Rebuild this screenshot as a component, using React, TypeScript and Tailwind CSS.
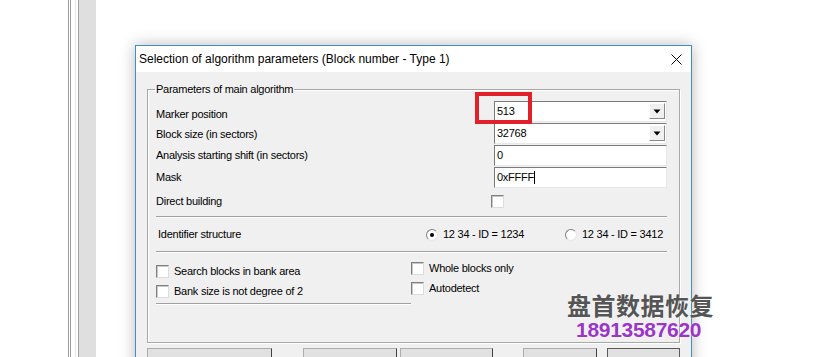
import React from "react";

const Check = () => (
  <div className="w-[13px] h-[13px] shrink-0 bg-white border border-t-[#808080] border-l-[#808080] border-r-[#dcdcdc] border-b-[#dcdcdc] shadow-[inset_1px_1px_0_#c8c8c8]" />
);

const Radio = ({ checked = false }: { checked?: boolean }) => (
  <div className="w-[12px] h-[12px] shrink-0 rounded-full bg-white border border-t-[#808080] border-l-[#808080] border-r-[#e6e6e6] border-b-[#e6e6e6] flex items-center justify-center">
    {checked && <div className="w-[4px] h-[4px] rounded-full bg-black" />}
  </div>
);

const Combo = ({ value }: { value: string }) => (
  <div className="w-[173px] h-[21px] shrink-0 bg-white border border-t-[#7a7a7a] border-l-[#7a7a7a] border-r-[#e8e8e8] border-b-[#e8e8e8] flex items-center">
    <span className="pl-[2px] flex-1 leading-none">{value}</span>
    <div className="w-[16px] h-[16px] mr-[1px] bg-[#f0f0f0] border border-t-white border-l-white border-r-[#8a8a8a] border-b-[#8a8a8a] flex items-center justify-center">
      <svg width="8" height="5" viewBox="0 0 8 5">
        <path d="M0.5 0.5 L7.5 0.5 L4 4.5 Z" fill="#000" />
      </svg>
    </div>
  </div>
);

const Field = ({ value, caret = false }: { value: string; caret?: boolean }) => (
  <div className="w-[173px] h-[21px] shrink-0 bg-white border border-t-[#7a7a7a] border-l-[#7a7a7a] border-r-[#e8e8e8] border-b-[#e8e8e8] flex items-center">
    <span className="pl-[2px] leading-none">{value}</span>
    {caret && <span className="w-px h-[13px] bg-black" />}
  </div>
);

const Sep = ({ className = "" }: { className?: string }) => (
  <div className={"h-[2px] border-t border-t-[#a0a0a0] border-b border-b-white " + className} />
);

export default function App() {
  return (
    <div className="relative w-[814px] h-[357px] overflow-hidden bg-white flex font-['Liberation_Sans',Arial,sans-serif] text-[11px] tracking-[-0.25px] text-black">
      {/* left background window edges */}
      <div className="w-[68px] shrink-0" />
      <div className="w-px shrink-0 bg-[#9a9a9a]" />
      <div className="w-px shrink-0 bg-white" />
      <div className="w-px shrink-0 bg-[#9a9a9a]" />
      <div className="w-[4px] shrink-0" />
      <div className="w-px shrink-0 bg-[#e6e6e6]" />
      <div className="w-[2px] shrink-0" />
      <div className="w-px shrink-0 bg-[#a0a0a0]" />
      <div className="w-[17px] shrink-0 bg-[#dfdfdf]" />
      <div className="w-[39px] shrink-0" />

      {/* dialog */}
      <div className="mt-[45px] w-[557px] shrink-0 self-start border border-[#3f8fc4] shadow-[0_0_14px_rgba(0,0,0,0.28)] bg-[#f0f0f0]">
        <div className="h-[26px] bg-white flex items-center justify-between pl-[3px] pr-[9px] tracking-normal">
          <span className="text-[12px] leading-none">Selection of algorithm parameters (Block number - Type 1)</span>
          <svg width="11" height="11" viewBox="0 0 11 11">
            <path d="M0.5 0.5 L10.5 10.5 M10.5 0.5 L0.5 10.5" stroke="#000" strokeWidth="1" />
          </svg>
        </div>

        <div className="px-[11px] pt-[11px]">
          <fieldset className="border border-[#a8a8a8] shadow-[inset_1px_1px_0_#fff,1px_1px_0_#fff] h-[260px]">
            <legend className="ml-[7px] px-[1px] leading-[13px]">Parameters of main algorithm</legend>
            <div className="pl-[8px] pr-[12px] pt-[4px]">
              <div className="h-[22px] flex items-center justify-between">
                <span className="mt-[7px]">Marker position</span>
                <Combo value="513" />
              </div>
              <div className="h-[22px] flex items-center justify-between">
                <span className="mt-[2px]">Block size (in sectors)</span>
                <Combo value="32768" />
              </div>
              <div className="h-[22px] flex items-center justify-between">
                <span>Analysis starting shift (in sectors)</span>
                <Field value="0" />
              </div>
              <div className="h-[22px] flex items-center justify-between">
                <span>Mask</span>
                <Field value="0xFFFF" caret />
              </div>
              <div className="h-[26px] flex items-center pt-[1px]">
                <span className="w-[335px] shrink-0">Direct building</span>
                <Check />
              </div>
              <Sep className="mt-[2px]" />
              <div className="h-[33px] flex items-center whitespace-nowrap">
                <span className="pl-[2px] w-[270px] shrink-0">Identifier structure</span>
                <Radio checked />
                <span className="ml-[5px] w-[122px] shrink-0">12 34 - ID = 1234</span>
                <Radio />
                <span className="ml-[5px]">12 34 - ID = 3412</span>
              </div>
              <Sep />
              <div className="flex mt-[6px] whitespace-nowrap">
                <div className="w-[255px] shrink-0">
                  <div className="h-[20px] flex items-center mt-[2px]">
                    <Check />
                    <span className="ml-[5px]">Search blocks in bank area</span>
                  </div>
                  <div className="h-[20px] flex items-center">
                    <Check />
                    <span className="ml-[5px]">Bank size is not degree of 2</span>
                  </div>
                  <Sep className="mt-[2px]" />
                </div>
                <div className="-mt-[1px]">
                  <div className="h-[20px] flex items-center">
                    <Check />
                    <span className="ml-[5px]">Whole blocks only</span>
                  </div>
                  <div className="h-[20px] flex items-center">
                    <Check />
                    <span className="ml-[5px]">Autodetect</span>
                  </div>
                </div>
              </div>
            </div>
          </fieldset>

          <div className="flex mt-[5px] h-[23px]">
            <div className="w-[125px] h-[23px] bg-[#e1e1e1] border border-[#adadad] border-r-[#404040]" />
            <div className="w-[94px] ml-[31px] h-[23px] bg-[#e1e1e1] border border-[#adadad] border-r-[#404040]" />
            <div className="w-[93px] ml-[3px] h-[23px] bg-[#e1e1e1] border border-[#adadad] border-r-[#404040]" />
            <div className="w-[74px] ml-[30px] h-[23px] bg-[#e1e1e1] border border-[#adadad] border-r-[#404040]" />
            <div className="w-[73px] ml-[10px] h-[23px] bg-[#e1e1e1] border border-[#5a5a5a]" />
          </div>
        </div>
      </div>

      {/* red annotation box */}
      <div className="absolute left-[475px] top-[92px] w-[57px] h-[32px] border-[4px] border-[#e0212a]" />

      {/* watermark */}
      <div className="absolute left-[567px] top-[292px] flex flex-col items-start leading-none tracking-normal">
        <span className="text-[24px] font-bold text-[#555] font-['Noto_Sans_CJK_SC',sans-serif] leading-[26px] tracking-[0.5px] [text-shadow:0_0_2px_#fff]">盘首数据恢复</span>
        <span className="ml-[9px] mt-[1px] text-[21px] font-bold text-[#9b35c9] leading-[22px] tracking-[-0.3px] [text-shadow:0_0_2px_#fff]">18913587620</span>
      </div>
    </div>
  );
}
